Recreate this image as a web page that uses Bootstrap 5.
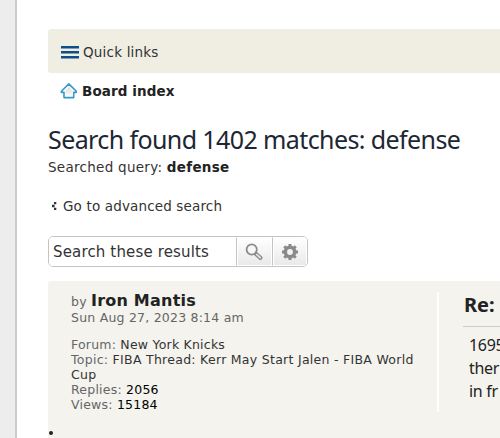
<!DOCTYPE html>
<html lang="en">
<head>
<meta charset="utf-8">
<meta name="viewport" content="width=device-width, initial-scale=1">
<title>Search results</title>
<link rel="stylesheet" href="https://cdn.jsdelivr.net/npm/bootstrap@5.3.0/dist/css/bootstrap.min.css">
<style>
html, body { height: 438px; overflow: hidden; }
body { background: #ededed; font: 13.5px/18px "DejaVu Sans", Verdana, sans-serif; color: #333; padding-left: 15px; }
.page-wrap { height: 438px; border-left: 2px solid #ccc; padding: 29px 0 0 31px; }
a, a:hover { color: inherit; text-decoration: none; }
.quick-bar { height: 44px; background: #f0ede3; border-radius: 3px 0 0 3px; padding: 2px 0 0 13px; letter-spacing: .2px; }
.crumbs { height: 36px; padding-left: 12px; letter-spacing: .1px; }
.crumbs a { color: #222; }
.result-title { font: 400 25px/34px "Noto Sans", sans-serif; letter-spacing: -.6px; color: #1c2733; height: 34px; margin-top: 13px; }
.query { height: 20px; line-height: 20px; margin-top: 1px; letter-spacing: .28px; }
.query strong { color: #222; }
.advanced { height: 20px; margin-top: 19px; padding-left: 3px; letter-spacing: .15px; }
.search-box { width: 260px; height: 31px; margin-top: 20px; border: 1.5px solid #c7c3bf; border-radius: 5px; overflow: hidden; background: #fff; }
.search-box input { width: 187px; border: 0; padding: 1px 0 0 4px; font-size: 15px; letter-spacing: .15px; color: #333; outline: 0; background: #fff; }
.search-box input::placeholder { color: #333; opacity: 1; }
.tool-btn { width: 37px; padding: 0 0 0 1px; border: 1px solid #fff; border-left: 1px solid #c7c3bf; background: linear-gradient(#fff, #e9e9e9); box-shadow: inset 1px 0 #fff; }
.result { height: 158px; margin-top: 14px; background: #f4f3ee; border-radius: 3px 0 0 0; padding: 11px 0 0 23px; }
.profile { width: 368px; height: 120px; border-right: 2px solid #fff; font-size: 12.5px; line-height: 15px; letter-spacing: .22px; color: #666; }
.profile dt { height: 18px; line-height: 18px; }
.author { font-size: 16px; color: #222; }
.profile dd { margin: 0; }
.topic { letter-spacing: .28px; padding-right: 15px; }
.profile dd a { color: #333; }
.profile dd span { color: #000; }
.post { margin-left: 24px; width: 37px; }
.post h3 { font: 700 20px/26px "Noto Sans", sans-serif; color: #222; height: 35px; margin: 0; padding: 0 0 0 1px; border-bottom: 1px solid #ccc; }
.post-text { font: 16px/23px "Noto Sans", sans-serif; letter-spacing: -.3px; padding: 7px 0 0 6px; white-space: nowrap; color: #222; }
.dot { width: 4px; height: 4px; margin: 19px 0 0 -22px; background: #222; }
</style>
</head>
<body>
<main class="page-wrap bg-white text-nowrap overflow-hidden">
  <nav class="quick-bar d-flex align-items-center">
    <a href="#" class="d-flex align-items-center"><svg width="18" height="13" viewBox="0 0 18 13" class="me-1"><path d="M0 0h18v2.4H0zM0 5h18v2.4H0zM0 10h18v2.4H0z" fill="#0d4f89"/></svg>Quick links</a>
  </nav>
  <nav class="crumbs d-flex align-items-center">
    <svg width="18" height="16" viewBox="0 0 18 16"><defs><linearGradient id="roof" x2="0" y2="1"><stop stop-color="#ddd"/><stop offset="1" stop-color="#fafafa"/></linearGradient></defs><path d="M8.8 .9 16.3 8.2V9.4H13.7V14.6H4V9.4H1.4V8.2Z" fill="#fff" stroke="#3598c9" stroke-width="1.6" stroke-linejoin="round"/><path d="M8.8 4 12.5 8v5H5.2V8Z" fill="url(#roof)"/></svg>
    <a href="#" class="fw-bold ms-1">Board index</a>
  </nav>
  <h2 class="result-title mb-0">Search found 1402 matches: defense</h2>
  <p class="query mb-0">Searched query: <strong>defense</strong></p>
  <p class="advanced d-flex align-items-center mb-0"><svg width="12" height="8" viewBox="0 0 12 8"><path d="M3 0h2.3v2.2H3zM1 2.8h2.6v2.4H1zM3 5.8h2.3V8H3z" fill="#333"/></svg><a href="#">Go to advanced search</a></p>
  <form class="search-box d-flex">
    <input type="text" placeholder="Search these results" aria-label="Search these results">
    <button type="button" class="tool-btn d-flex align-items-center justify-content-center" aria-label="Search"><svg width="18" height="18" viewBox="0 0 18 18"><path d="m10.2 10.2 5.2 4.7" stroke="#8c8c8c" stroke-width="4.2" stroke-linecap="round"/><path d="m11.8 11.7 3.4 3" stroke="#e2e2e2" stroke-width="1.8" stroke-linecap="round"/><circle cx="6.7" cy="6.5" r="5.1" fill="#f7f7f7" stroke="#8c8c8c" stroke-width="1.8"/></svg></button>
    <button type="button" class="tool-btn d-flex align-items-center justify-content-center" aria-label="Settings"><svg width="18" height="18" viewBox="0 0 18 18"><g stroke="#8a8a8a"><circle cx="9" cy="9" r="4.7" fill="none" stroke-width="3.6"/><path d="M9 1v2.5M9 14.5V17M1 9h2.5M14.5 9H17M3.3 3.3 5 5M13 13l1.7 1.7M3.3 14.7 5 13M13 5l1.7-1.7" stroke-width="3"/></g></svg></button>
  </form>
  <article class="result d-flex">
    <div>
      <dl class="profile mb-0 text-wrap">
        <dt class="fw-normal">by <a href="#" class="author fw-bold">Iron Mantis</a></dt>
        <dd>Sun Aug 27, 2023 8:14 am</dd>
        <dd class="pt-2 mt-1">Forum: <a href="#">New York Knicks</a></dd>
        <dd class="topic">Topic: <a href="#">FIBA Thread: Kerr May Start Jalen - FIBA World Cup</a></dd>
        <dd>Replies: <span>2056</span></dd>
        <dd>Views: <span>15184</span></dd>
      </dl>
      <div class="dot rounded-circle"></div>
    </div>
    <div class="post">
      <h3>Re:</h3>
      <div class="post-text">1695<br>ther<br>in fr</div>
    </div>
  </article>
</main>
<script src="https://cdn.jsdelivr.net/npm/bootstrap@5.3.0/dist/js/bootstrap.bundle.min.js"></script>
</body>
</html>
